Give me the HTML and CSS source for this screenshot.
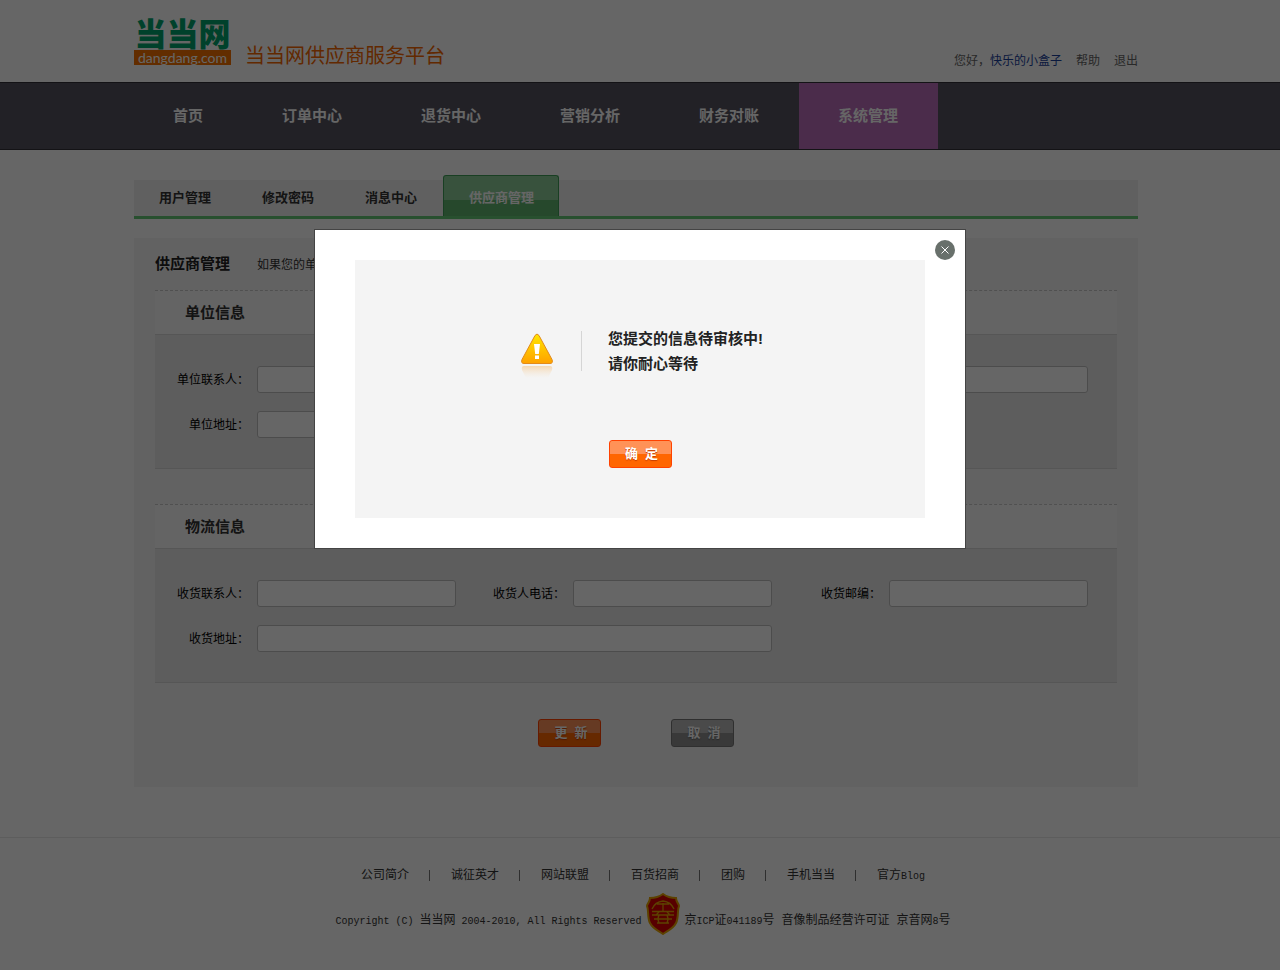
FILE: index.html
```
<!DOCTYPE html>
<html lang="zh-CN">
<head>
<meta charset="utf-8">
<meta name="viewport" content="width=device-width, initial-scale=1">
<title>当当网供应商服务平台</title>
<link rel="stylesheet" href="styles.css">
</head>
<body>
<header class="header">
  <div class="wrap header-inner">
    <a class="logo" href="#" aria-label="当当网 dangdang.com">
      <span class="logo-name">当当网</span>
      <span class="logo-domain">dangdang.com</span>
    </a>
    <p class="site-title">当当网供应商服务平台</p>
    <div class="user">
      <span>您好，<a class="user-name" href="#">快乐的小盒子</a></span>
      <a href="#">帮助</a>
      <a href="#">退出</a>
    </div>
  </div>
</header>
<nav class="nav">
  <div class="wrap nav-inner">
    <a href="#">首页</a>
    <a href="#">订单中心</a>
    <a href="#">退货中心</a>
    <a href="#">营销分析</a>
    <a href="#">财务对账</a>
    <a class="active" href="#">系统管理</a>
  </div>
</nav>
<main class="wrap main">
  <nav class="tabs">
    <a href="#">用户管理</a>
    <a href="#">修改密码</a>
    <a href="#">消息中心</a>
    <a class="active" href="#">供应商管理</a>
  </nav>
  <form class="panel">
    <div class="panel-head">
      <h1>供应商管理</h1>
      <p>如果您的单位信息有变更，请及时更新。</p>
    </div>
    <section class="section">
      <h2>单位信息</h2>
      <div class="fields">
        <label for="u1">单位联系人：</label><input id="u1" type="text">
        <label for="u2">联系人电话：</label><input id="u2" type="text">
        <label for="u3">单位邮编：</label><input id="u3" type="text">
        <label for="u4">单位地址：</label><input id="u4" class="wide" type="text">
      </div>
    </section>
    <section class="section">
      <h2>物流信息</h2>
      <div class="fields">
        <label for="r1">收货联系人：</label><input id="r1" type="text">
        <label for="r2">收货人电话：</label><input id="r2" type="text">
        <label for="r3">收货邮编：</label><input id="r3" type="text">
        <label for="r4">收货地址：</label><input id="r4" class="wide" type="text">
      </div>
    </section>
    <div class="actions">
      <button class="btn" type="button">更&nbsp; 新</button>
      <button class="btn btn-grey" type="button">取&nbsp; 消</button>
    </div>
  </form>
</main>
<footer class="footer">
  <ul class="links">
    <li><a href="#">公司简介</a></li>
    <li><a href="#">诚征英才</a></li>
    <li><a href="#">网站联盟</a></li>
    <li><a href="#">百货招商</a></li>
    <li><a href="#">团购</a></li>
    <li><a href="#">手机当当</a></li>
    <li><a href="#">官方<span class="latin">Blog</span></a></li>
  </ul>
  <div class="legal">
    <span class="legal-item"><span class="latin">Copyright (C) </span>当当网<span class="latin"> 2004-2010, All Rights Reserved</span></span>
    <svg class="shield" width="34" height="42" viewBox="0 0 34 42" aria-hidden="true">
      <path d="M17 1C13 4 7 5 4 5C4 9 1 11 1 13C3 17 1 24 4 30C7 36 13 38 17 41C21 38 27 36 30 30C33 24 31 17 33 13C33 11 30 9 30 5C27 5 21 4 17 1Z" fill="#d90000" stroke="#e8a400" stroke-width="2"/>
      <g fill="none" stroke="#e8a400" stroke-width="1.3">
        <path d="M6 16Q9 9 17 8Q25 9 28 16M11 11H23M17 10V18M6 18.500H28M6 22H28M8 26H26M11 30H23M13 22Q11 26 13 30M21 22Q23 26 21 30M13 19L10 22M21 19L24 22"/>
      </g>
    </svg>
    <span class="legal-item">京<span class="latin">ICP</span>证<span class="latin">041189</span>号</span>
    <span class="legal-item">音像制品经营许可证</span>
    <span class="legal-item">京音网<span class="latin">8</span>号</span>
  </div>
</footer>
<div class="overlay">
  <div class="modal" role="dialog" aria-modal="true" aria-labelledby="notice">
    <button class="close" type="button" aria-label="关闭">
      <svg width="20" height="20" viewBox="0 0 20 20" aria-hidden="true">
        <circle cx="10" cy="10" r="10" fill="#68706b"/>
        <path d="M6.500 6.500L13.500 13.500M13.500 6.500L6.500 13.500" stroke="#fff" stroke-width="1"/>
      </svg>
    </button>
    <div class="modal-body">
      <div class="notice">
        <svg class="warn" width="34" height="46" viewBox="0 0 34 46" aria-hidden="true">
          <defs>
            <linearGradient id="g1" x1="0" y1="0" x2="0" y2="1"><stop offset="0" stop-color="#ffe600"/><stop offset="1" stop-color="#ffa100"/></linearGradient>
            <linearGradient id="g2" x1="0" y1="0" x2="0" y2="1"><stop offset="0" stop-color="#f5b565" stop-opacity=".45"/><stop offset="1" stop-color="#f7d8b0" stop-opacity="0"/></linearGradient>
          </defs>
          <path d="M15 2.500Q17 -.5 19 2.500L32 26.500Q33.500 30.500 30 30.500H4Q.5 30.500 2 26.500Z" fill="url(#g1)" stroke="#e28a1c"/>
          <path d="M14 11H20L18.800 21H15.200ZM15 22.500H19V26H15Z" fill="#fff"/>
          <path d="M4 33H30Q33 33 32 37L28 45H6L2 37Q1 33 4 33Z" fill="url(#g2)"/>
        </svg>
        <p id="notice">您提交的信息待审核中!<br>请你耐心等待</p>
      </div>
      <button class="btn" type="button">确&nbsp; 定</button>
    </div>
  </div>
</div>
</body>
</html>
```
FILE: styles.css
```
* { box-sizing: border-box; }
body {
  margin: 0;
  background: #fff;
  color: #333;
  font: 12px/18px "Liberation Sans", "Noto Sans CJK SC", sans-serif;
}
h1, h2, p, ul { margin: 0; padding: 0; }
a { color: inherit; text-decoration: none; }
.wrap {
  width: 100%;
  max-width: 1004px;
  margin: 0 auto;
}
.header, .nav { padding-right: 8px; }

.header { height: 82px; }
.header-inner { display: flex; align-items: flex-end; height: 70px; }
.logo { width: 97px; margin-bottom: 5px; }
.logo-name {
  display: block;
  padding-bottom: 3px;
  color: #00a46c;
  font: 900 32px/30px "Noto Sans CJK SC", sans-serif;
  text-align: center;
}
.logo-domain {
  display: block;
  background: #f57200;
  color: #fff;
  font: 14px/15px Lato, sans-serif;
  text-align: center;
}
.site-title {
  margin-left: 14px;
  padding-bottom: 1px;
  color: #f56600;
  font: 400 20px/28px "Noto Sans CJK SC", sans-serif;
}
.user { display: flex; gap: 14px; margin-left: auto; color: #666; }
.user-name { color: #1a3f9c; }

.nav { background: #55535f; border-top: 1px solid #333139; border-bottom: 1px solid #333139; }
.nav-inner { display: flex; }
.nav a {
  padding: 0 40px 0 39px;
  color: #fff;
  font-size: 15px;
  font-weight: bold;
  line-height: 66px;
}
.nav .active { background: #bb6ebb; }

.main { max-width: 1012px; padding: 25px 8px 0 0; }
.tabs {
  display: flex;
  align-items: flex-end;
  height: 44px;
  background: linear-gradient(#f0f0f0, #f0f0f0) 0 5px no-repeat;
  border-bottom: 3px solid #64c876;
}
.tabs a {
  padding: 0 26px 0 25px;
  color: #333;
  font-size: 13px;
  font-weight: bold;
  line-height: 36px;
}
.tabs .active {
  height: 41px;
  padding-left: 25px;
  padding-right: 24px;
  border: 1px solid #3f9f58;
  border-bottom: 0;
  border-radius: 3px 3px 0 0;
  background: linear-gradient(#8ccd98 24px, #5fb46e 24px);
  color: #fff;
  line-height: 44px;
}

.panel { margin-top: 19px; padding: 0 21px 40px; background: #f6f6f6; }
.panel-head { display: flex; gap: 27px; height: 52px; line-height: 52px; }
.panel-head h1 { color: #222; font-size: 15px; }
.panel-head p { padding-top: 1px; }
.section { margin-bottom: 35px; }
.section h2 {
  height: 44px;
  padding-left: 30px;
  border-top: 1px dashed #c8c8c8;
  background: #fafafa;
  color: #333;
  font-size: 15px;
  line-height: 43px;
}
.fields {
  display: grid;
  grid-template-columns: 94px 1fr 109px 1fr 109px 1fr;
  row-gap: 18px;
  padding: 31px 29px 30px 0;
  border: solid #d8d8d8;
  border-width: 1px 0;
  background: #e8e8e8;
}
.fields label { height: 27px; color: #000; line-height: 29px; text-align: right; }
.fields input {
  min-width: 0;
  height: 27px;
  margin-left: 8px;
  padding: 0 6px;
  border: 1px solid #bebebe;
  border-radius: 3px;
  background: #fff;
  font: inherit;
}
.fields .wide { grid-column: span 3; }
.actions { display: flex; justify-content: center; gap: 70px; padding-top: 1px; }
.btn {
  width: 63px;
  height: 28px;
  padding: 0 0 0 3px;
  border: 1px solid #ff4200;
  border-radius: 3px;
  background: linear-gradient(#ff9257 13px, #ff6600 13px);
  color: #fff;
  font: bold 13px/26px "Liberation Sans", "Noto Sans CJK SC", sans-serif;
  text-shadow: 0 1px 1px #c43c00;
  white-space: nowrap;
}
.btn-grey {
  border-color: #757575;
  background: linear-gradient(#b9b9b9 13px, #8e8e8e 13px);
  text-shadow: 0 1px 1px #666;
}

.footer {
  margin-top: 50px;
  padding: 28px 0 30px 6px;
  border-top: 1px solid #e8e8e8;
}
.links { display: flex; justify-content: center; list-style: none; }
.links li { display: flex; align-items: center; }
.links li + li::before {
  width: 1px;
  height: 11px;
  margin: 0 21px 0 20px;
  background: #777;
  content: "";
}
.latin { font-family: "Liberation Mono", monospace; font-size: 10px; line-height: 1; white-space: pre; }
.legal { display: flex; align-items: center; justify-content: center; margin-top: 9px; }
.shield { margin: 0 4px 0 5px; }
.legal-item { padding-top: 12px; }
.legal-item + .legal-item { margin-left: 7px; }

.overlay {
  position: fixed;
  inset: 0;
  display: flex;
  align-items: flex-start;
  justify-content: center;
  padding-top: 230px;
  background: rgba(0, 0, 0, .6);
}
.modal {
  position: relative;
  width: 650px;
  padding: 30px 40px;
  background: #fff;
  box-shadow: 0 0 0 1px #444;
}
.close {
  position: absolute;
  top: 10px;
  right: 10px;
  width: 20px;
  height: 20px;
  padding: 0;
  border: 0;
  background: none;
}
.close svg { display: block; }
.modal-body {
  display: flex;
  flex-direction: column;
  align-items: center;
  padding: 66px 0 50px;
  background: #f4f4f4;
}
.notice { display: flex; align-items: flex-start; align-self: stretch; padding-left: 165px; margin-bottom: 61px; }
.warn { margin-top: 7px; }
.notice::before { order: 1; width: 1px; height: 40px; margin: 5px 26px 0 27px; background: #d5d5d5; content: ""; }
.notice p { order: 2; color: #222; font-size: 15px; font-weight: bold; line-height: 25px; }
```
